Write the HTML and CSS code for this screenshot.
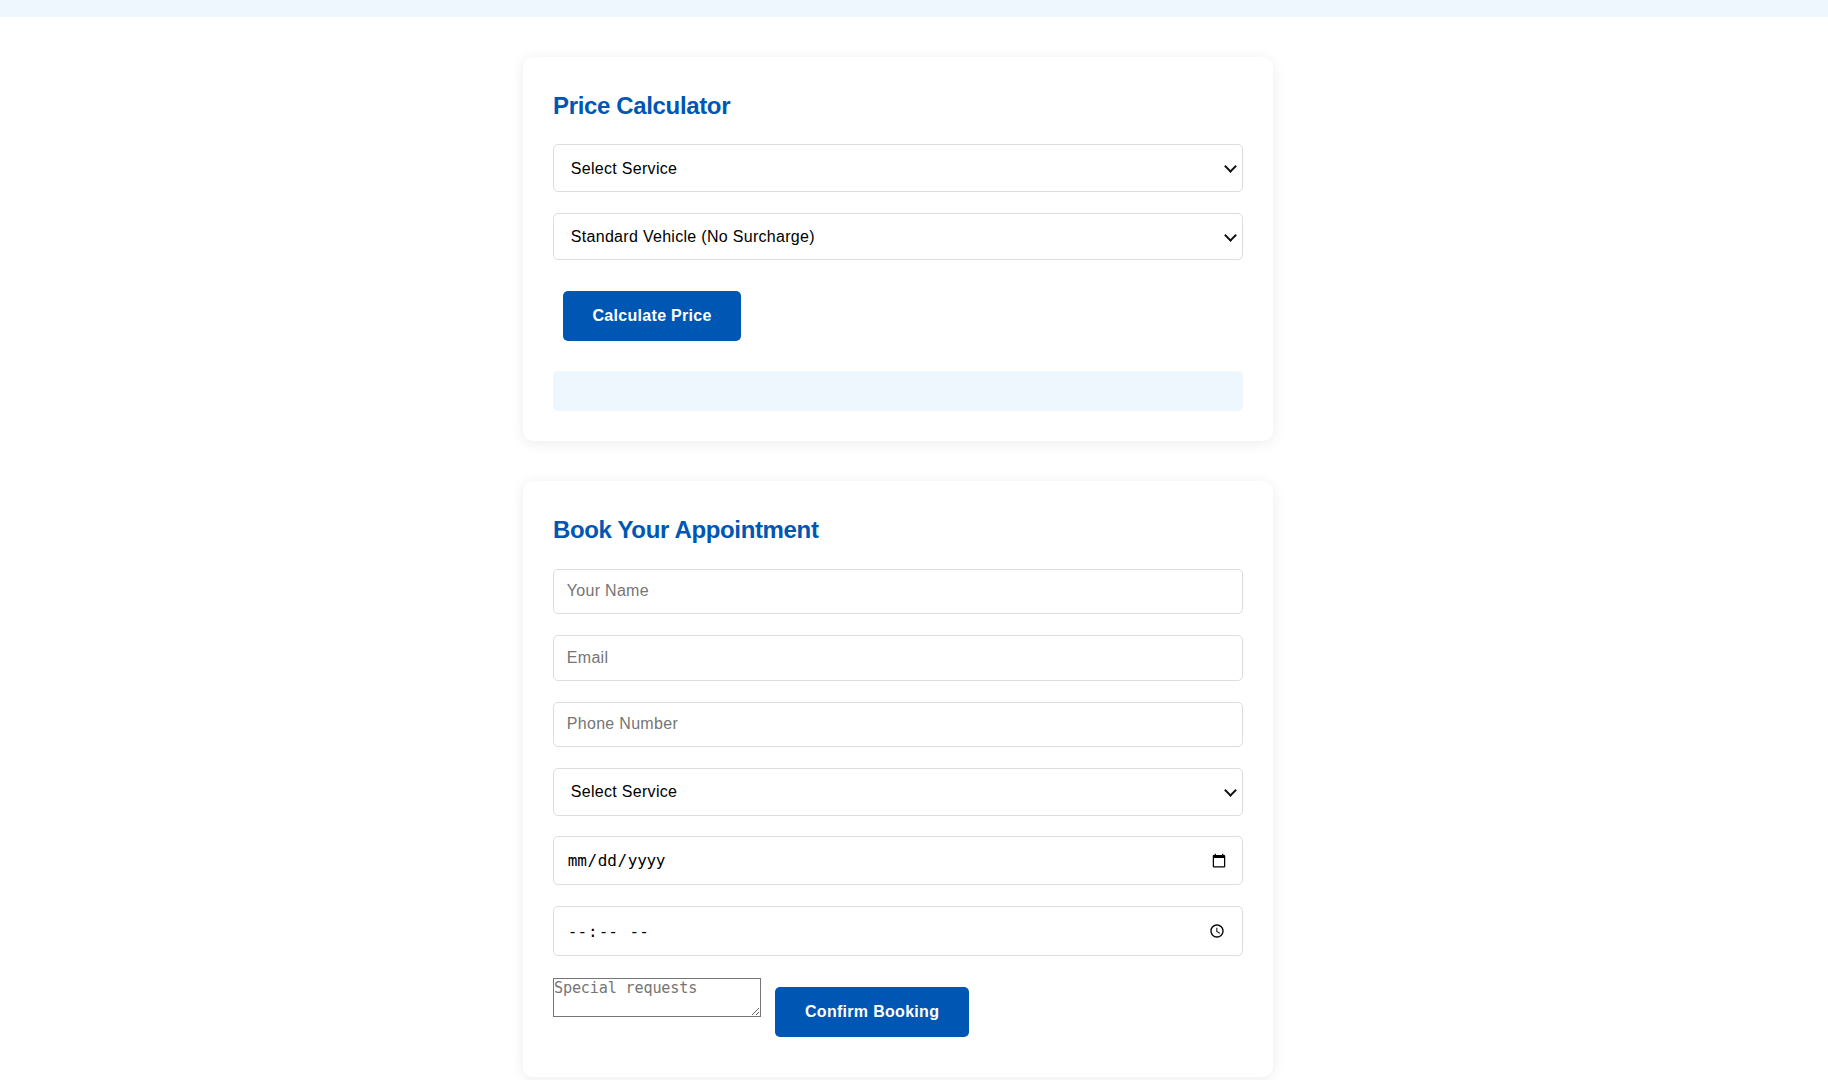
FILE: index.html
```html
<!DOCTYPE html>
<html lang="en">
<head>
<meta charset="utf-8">
<title>Booking</title>
<link rel="stylesheet" href="styles.css">
</head>
<body>
<header class="topbar"></header>
<main class="page">
  <section class="card">
    <h2 class="card-title">Price Calculator</h2>
    <div class="select-wrap">
      <select class="field field-select">
        <option>Select Service</option>
        <option>Basic Wash</option>
        <option>Full Detail</option>
      </select>
    </div>
    <div class="select-wrap">
      <select class="field field-select">
        <option>Standard Vehicle (No Surcharge)</option>
        <option>SUV / Truck</option>
      </select>
    </div>
    <button class="btn" type="button">Calculate Price</button>
    <div class="result"></div>
  </section>
  <section class="card">
    <h2 class="card-title">Book Your Appointment</h2>
    <form class="booking">
      <input class="field" type="text" placeholder="Your Name">
      <input class="field" type="email" placeholder="Email">
      <input class="field" type="tel" placeholder="Phone Number">
      <div class="select-wrap">
        <select class="field field-select">
          <option>Select Service</option>
          <option>Basic Wash</option>
          <option>Full Detail</option>
        </select>
      </div>
      <input class="field field-mono" type="date">
      <input class="field field-mono" type="time">
      <textarea class="notes" placeholder="Special requests"></textarea>
      <button class="btn" type="button">Confirm Booking</button>
    </form>
  </section>
</main>
</body>
</html>
```

FILE: styles.css
```css
* {
  margin: 0;
  padding: 0;
  box-sizing: border-box;
}

body {
  font-family: "Liberation Sans", Arial, sans-serif;
  line-height: 1.6;
  color: #222;
  background: #ffffff;
}

.topbar {
  height: 17px;
  background: #eef6fe;
}

.page {
  display: flex;
  flex-direction: column;
  align-items: center;
  padding: 40px 32px 40px 0;
  gap: 40px;
}

.card {
  width: 750px;
  background: #ffffff;
  border-radius: 10px;
  padding: 30px;
  box-shadow: 0 2px 14px rgba(0, 0, 0, 0.08);
}

.card-title {
  font-size: 24px;
  font-weight: bold;
  color: #0056b3;
  letter-spacing: -0.35px;
  margin-bottom: 19px;
}

.field {
  display: block;
  width: 100%;
  margin-bottom: 20.9px;
  padding: 0.8rem;
  border: 1px solid #dddddd;
  border-radius: 5px;
  font-family: "Liberation Sans", Arial, sans-serif;
  font-size: 16px;
  letter-spacing: 0.3px;
  color: #000;
  background: #fff;
}

.field::placeholder {
  color: #757575;
}

.select-wrap {
  position: relative;
}

.select-wrap::after {
  content: "";
  position: absolute;
  right: 8.5px;
  top: 50%;
  width: 7px;
  height: 7px;
  margin-top: -6px;
  border-right: 2px solid #111;
  border-bottom: 2px solid #111;
  transform: rotate(45deg);
  pointer-events: none;
}

.field-select {
  appearance: none;
  -webkit-appearance: none;
  height: 47.5px;
  padding: 0 36px 0 16.8px;
}

.field-mono {
  font-family: "DejaVu Sans Mono", monospace;
  letter-spacing: -0.3px;
}

.btn {
  display: inline-block;
  margin: 10px;
  padding: 1rem 29.5px;
  border: none;
  border-radius: 5px;
  background: #0056b3;
  color: #ffffff;
  font-family: "Liberation Sans", Arial, sans-serif;
  font-size: 16px;
  font-weight: bold;
  letter-spacing: 0.3px;
  cursor: pointer;
}

.result {
  margin-top: 20px;
  padding: 20px;
  border-radius: 5px;
  background: #eef6fe;
}

.notes {
  width: 208px;
  height: 39.4px;
  padding: 0;
  border: 1px solid #767676;
  font-family: "DejaVu Sans Mono", monospace;
  font-size: 15.2px;
  letter-spacing: -0.2px;
  color: #000;
}

.notes::placeholder {
  color: #757575;
}
```
